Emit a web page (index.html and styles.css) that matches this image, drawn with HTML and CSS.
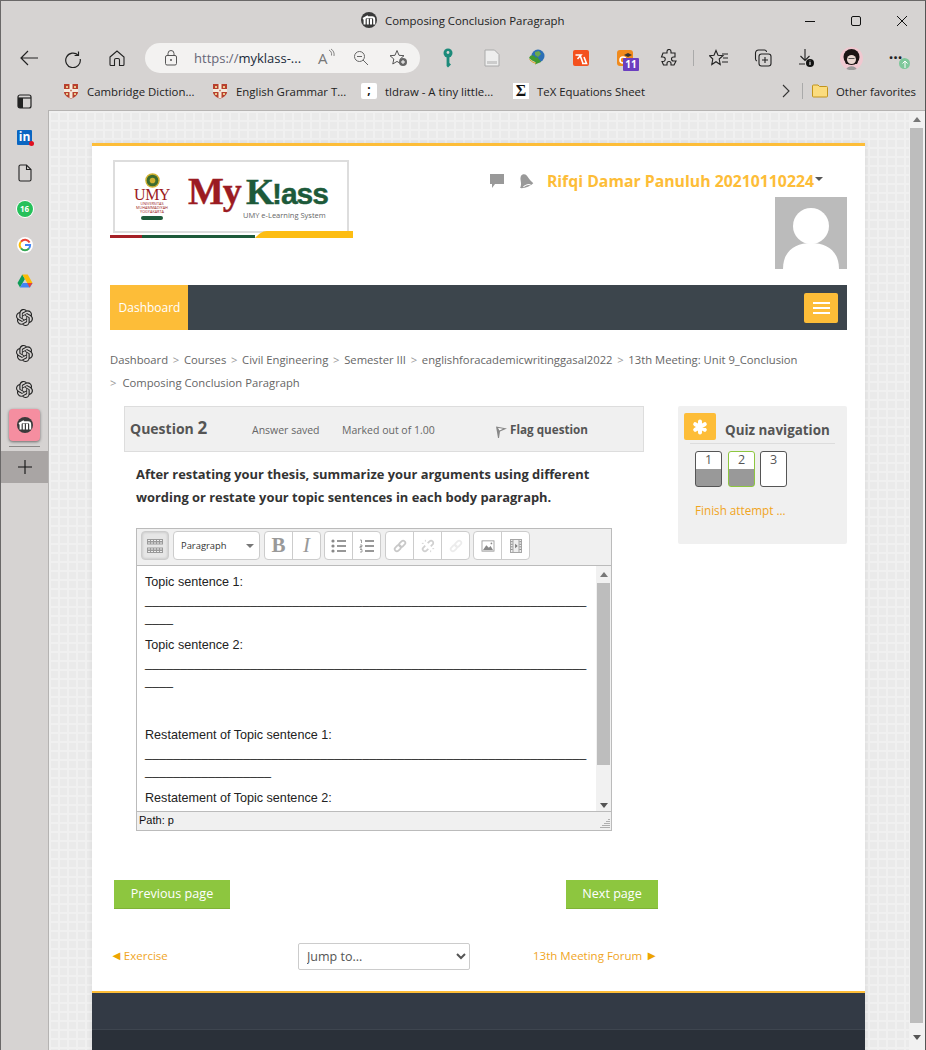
FILE: index.html
```html
<!DOCTYPE html>
<html>
<head>
    <title>Composing Conclusion Paragraph</title>
    <link rel="stylesheet" href="styles.css">
</head>
<body>
    <svg class="defs" width="0" height="0">
        <symbol id="moodle" viewBox="0 0 16 16">
            <circle cx="8" cy="8" r="8" fill="#3a3a3a"/>
            <path d="M3.600 12.500V7.600C3.600 6 4.600 5.200 5.800 5.200H11C12.400 5.200 13.200 6.200 13.200 7.400V12.500M6.800 12.500V6.800M10 12.500V6.800M2 6.800L7 4" fill="none" stroke="#fff" stroke-width="2"/>
        </symbol>
        <symbol id="shield" viewBox="0 0 16 16">
            <path d="M1 1H15V9C15 12.500 11 14.600 8 15.600C5 14.600 1 12.500 1 9Z" fill="#b8402e"/>
            <path d="M1 6H15V9H1ZM6.500 1H9.500V15H6.500Z" fill="#f3e9dc"/>
            <path d="M3 3H5V5H3ZM11 3H13V5H11ZM3 10H5V12H3ZM11 10H13V12H11Z" fill="#e8c98c"/>
            <path d="M7.400 6.800H8.600V8.200H7.400Z" fill="#b8402e"/>
        </symbol>
        <symbol id="knot" viewBox="0 0 24 24">
            <path fill="#222" d="M22.2819 9.8211a5.9847 5.9847 0 0 0-.5157-4.9108 6.0462 6.0462 0 0 0-6.5098-2.9A6.0651 6.0651 0 0 0 4.9807 4.1818a5.9847 5.9847 0 0 0-3.9977 2.9 6.0462 6.0462 0 0 0 .7427 7.0966 5.98 5.98 0 0 0 .511 4.9107 6.051 6.051 0 0 0 6.5146 2.9001A5.9847 5.9847 0 0 0 13.2599 24a6.0557 6.0557 0 0 0 5.7718-4.2058 5.9894 5.9894 0 0 0 3.9977-2.9001 6.0557 6.0557 0 0 0-.7475-7.0729zm-9.022 12.6081a4.4755 4.4755 0 0 1-2.8764-1.0408l.1419-.0804 4.7783-2.7582a.7948.7948 0 0 0 .3927-.6813v-6.7369l2.02 1.1686a.071.071 0 0 1 .038.052v5.5826a4.504 4.504 0 0 1-4.4945 4.4944zm-9.6607-4.1254a4.4708 4.4708 0 0 1-.5346-3.0137l.142.0852 4.783 2.7582a.7712.7712 0 0 0 .7806 0l5.8428-3.3685v2.3324a.0804.0804 0 0 1-.0332.0615L9.74 19.9502a4.4992 4.4992 0 0 1-6.1408-1.6464zM2.3408 7.8956a4.485 4.485 0 0 1 2.3655-1.9728V11.6a.7664.7664 0 0 0 .3879.6765l5.8144 3.3543-2.0201 1.1685a.0757.0757 0 0 1-.071 0l-4.8303-2.7865A4.504 4.504 0 0 1 2.3408 7.872zm16.5963 3.8558L13.1038 8.364 15.1192 7.2a.0757.0757 0 0 1 .071 0l4.8303 2.7913a4.4944 4.4944 0 0 1-.6765 8.1042v-5.6772a.79.79 0 0 0-.407-.667zm2.0107-3.0231l-.142-.0852-4.7735-2.7818a.7759.7759 0 0 0-.7854 0L9.409 9.2297V6.8974a.0662.0662 0 0 1 .0284-.0615l4.8303-2.7866a4.4992 4.4992 0 0 1 6.6802 4.66zM8.3065 12.863l-2.02-1.1638a.0804.0804 0 0 1-.038-.0567V6.0742a4.4992 4.4992 0 0 1 7.3757-3.4537l-.142.0805L8.704 5.459a.7948.7948 0 0 0-.3927.6813zm1.0976-2.3654l2.602-1.4998 2.6069 1.4998v2.9994l-2.5974 1.4997-2.6067-1.4997Z"/>
        </symbol>
    </svg>

    <div class="titlebar">
        <div class="title">
            <svg class="icon16" width="16" height="16"><use href="#moodle"/></svg>
            <span>Composing Conclusion Paragraph</span>
        </div>
        <div class="window-controls">
            <svg width="46" height="40" viewBox="0 0 46 40"><path d="M18 20.500H28" stroke="#111"/></svg>
            <svg width="46" height="40" viewBox="0 0 46 40"><rect x="18.500" y="15.500" width="9" height="9" rx="1.500" fill="none" stroke="#111"/></svg>
            <svg width="46" height="40" viewBox="0 0 46 40"><path d="M18 15L28 25M28 15L18 25" stroke="#111"/></svg>
        </div>
    </div>

    <div class="toolbar">
        <div class="tool nav-tool">
            <svg width="22" height="22" viewBox="0 0 22 22"><path d="M20 11H3M10 4L3 11L10 18" fill="none" stroke="#222" stroke-width="1.200"/></svg>
        </div>
        <div class="tool nav-tool">
            <svg width="20" height="20" viewBox="0 0 20 20"><path d="M15.500 3.600V7.500H11.600M15.300 7.300A7.300 7.300 0 1 0 17.200 11" fill="none" stroke="#222" stroke-width="1.200"/></svg>
        </div>
        <div class="tool nav-tool">
            <svg width="18" height="18" viewBox="0 0 18 18"><path d="M2 8L9 2L16 8V15.500A1 1 0 0 1 15 16.500H11.500V11A1.500 1.500 0 0 0 10 9.500H8A1.500 1.500 0 0 0 6.500 11V16.500H3A1 1 0 0 1 2 15.500Z" fill="none" stroke="#222" stroke-width="1.100"/></svg>
        </div>
        <div class="address">
            <svg width="14" height="16" viewBox="0 0 14 16"><rect x="1.500" y="5.500" width="11" height="9.500" rx="1.500" fill="none" stroke="#555"/><path d="M4 5.500V3.500A3 3 0 0 1 10 3.500V5.500" fill="none" stroke="#555"/><circle cx="7" cy="10" r="1" fill="#555"/></svg>
            <span class="url"><span class="url-dim">https://</span>myklass-...</span>
            <span class="read-aloud">A<svg width="7" height="12" viewBox="0 0 7 12"><path d="M1 2C3 3 4 5 3.500 7.500M3 1C5.500 2.500 6.500 5 6 8" fill="none" stroke="#777" stroke-width="0.900"/></svg></span>
            <svg width="16" height="16" viewBox="0 0 16 16"><circle cx="6.500" cy="6.500" r="5" fill="none" stroke="#666"/><path d="M10 10L15 15M4 6.500H9" stroke="#666"/></svg>
            <svg class="fav-add" width="20" height="18" viewBox="0 0 20 18"><path d="M8 1.500L10 6.300L15 6.700L11.200 10L12.200 15L8 12.400L3.800 15L4.800 10L1 6.700L6 6.300Z" fill="none" stroke="#555"/><circle cx="14" cy="13" r="4" fill="#666"/><path d="M12 13H16M14 11V15" stroke="#fff"/></svg>
        </div>
        <div class="tool first-ext">
            <svg width="12" height="20" viewBox="0 0 12 20"><circle cx="6" cy="5" r="4.500" fill="#1c8a7a"/><circle cx="6" cy="4.500" r="1.400" fill="#d6d3d2"/><path d="M4.600 9H7.400V15L9 16.500L6 19.500L4.600 18Z" fill="#1c8a7a"/></svg>
        </div>
        <div class="tool">
            <svg width="16" height="18" viewBox="0 0 16 18"><path d="M1 1H10.500L15 5.500V17H1Z" fill="#eee" stroke="#aaa"/><path d="M3 12H13V15H3Z" fill="#ccc"/></svg>
        </div>
        <div class="tool">
            <svg width="18" height="18" viewBox="0 0 18 18"><circle cx="10" cy="7" r="6.500" fill="#2c6fb5"/><path d="M7 3L11 2L13 5L10 8L7 6Z" fill="#6aa84f"/><path d="M1 9C3 5 6 6 8 9L9 7.500L13 13L7 15.500L7.500 13C5 12 3 11 1 9Z" fill="#3f9a2f"/><path d="M1.500 10.500C4 13 6 14 8 14" fill="none" stroke="#e0a020"/></svg>
        </div>
        <div class="tool">
            <div class="ext-red">
                <svg width="16" height="16" viewBox="0 0 16 16"><path d="M2.500 4H8L4.500 8M7 4L10 12.500M9 12.500L13.500 12.500L11 6" fill="none" stroke="#fff" stroke-width="1.600"/></svg>
            </div>
        </div>
        <div class="tool">
            <div class="ext-orange">
                <svg width="16" height="16" viewBox="0 0 16 16"><circle cx="6" cy="9" r="3" fill="none" stroke="#fff" stroke-width="1.600"/><path d="M7 4L11 2L15 4L11 6Z" fill="#333"/></svg>
                <span class="ext-badge">11</span>
            </div>
        </div>
        <div class="tool">
            <svg width="18" height="18" viewBox="0 0 18 18"><path d="M7 2.500A2 2 0 0 1 11 2.500V4H15V8H13.500A2 2 0 0 0 13.500 12H16L14 16H11V14.500A2 2 0 0 0 7 14.500V16H3.500L2 12.500H3A2.200 2.200 0 0 0 3 8H1.500L3 4H7Z" fill="none" stroke="#222" stroke-width="1.100"/></svg>
        </div>
        <div class="tool-sep"></div>
        <div class="tool right-tool">
            <svg width="20" height="18" viewBox="0 0 20 18"><path d="M7 1.500L9 6.300L14 6.700L10.200 10L11.200 15.500L7 12.700L2.800 15.500L3.800 10L0.500 6.700L5 6.300Z" fill="none" stroke="#222" stroke-width="1.100"/><path d="M13 5H19M14 9H19M13 13H19" stroke="#222"/></svg>
        </div>
        <div class="tool">
            <svg width="18" height="18" viewBox="0 0 18 18"><rect x="5" y="5" width="12" height="12" rx="2.500" fill="none" stroke="#222" stroke-width="1.100"/><path d="M3 12A2 2 0 0 1 1.500 10V4A3 3 0 0 1 4.500 1H10A2 2 0 0 1 12.500 3M8 11H14M11 8V14" fill="none" stroke="#222" stroke-width="1.100"/></svg>
        </div>
        <div class="tool">
            <svg width="20" height="20" viewBox="0 0 20 20"><path d="M8 1V12M3.500 8L8 12.500L12.500 8M2 16H8" fill="none" stroke="#222" stroke-width="1.100"/><circle cx="13" cy="15" r="4" fill="#111"/><path d="M13 14V17M13 12.700V13.300" stroke="#fff"/></svg>
        </div>
        <div class="tool">
            <div class="avatar">
                <svg width="23" height="23" viewBox="0 0 23 23"><circle cx="11.500" cy="10" r="8" fill="#1c1414"/><path d="M6 17C5 15 5 14 6 13L17 13C18 14 18 15 17 17Z" fill="#1c1414"/><circle cx="11.500" cy="12.500" r="4.500" fill="#e9d6d0"/><path d="M8.500 11.500H14.500" stroke="#555"/><path d="M6 23C7 18 16 18 17 23Z" fill="#999"/></svg>
            </div>
        </div>
        <div class="tool">
            <span class="dots">...</span>
            <span class="update-dot">
                <svg width="10" height="10" viewBox="0 0 10 10"><path d="M5 9V2M2.500 4.500L5 2L7.500 4.500" fill="none" stroke="#fff"/></svg>
            </span>
        </div>
    </div>

    <div class="bookmarks">
        <div class="bookmark bm-1"><svg width="16" height="16"><use href="#shield"/></svg><span>Cambridge Diction...</span></div>
        <div class="bookmark bm-2"><svg width="16" height="16"><use href="#shield"/></svg><span>English Grammar T...</span></div>
        <div class="bookmark bm-3"><span class="tldraw">;</span><span>tldraw - A tiny little...</span></div>
        <div class="bookmark bm-4"><span class="sigma">Σ</span><span>TeX Equations Sheet</span></div>
        <svg class="bm-more" width="10" height="14" viewBox="0 0 10 14"><path d="M2 1L8 7L2 13" fill="none" stroke="#333" stroke-width="1.100"/></svg>
        <div class="bm-sep"></div>
        <div class="bookmark">
            <svg width="16" height="14" viewBox="0 0 16 14"><path d="M0.500 2A1 1 0 0 1 1.500 1H6L7.500 2.500H14.500A1 1 0 0 1 15.500 3.500V12A1 1 0 0 1 14.500 13H1.500A1 1 0 0 1 0.500 12Z" fill="#fbdc7e" stroke="#c2941c"/></svg>
            <span>Other favorites</span>
        </div>
    </div>

    <div class="window">
        <div class="sidebar">
            <div class="side-item">
                <svg width="15" height="15" viewBox="0 0 15 15"><rect x="1" y="1" width="13" height="13" rx="2" fill="none" stroke="#222" stroke-width="1.200"/><path d="M1 4H14" stroke="#222" stroke-width="1.200"/><path d="M1 4H6V14H3A2 2 0 0 1 1 12Z" fill="#222"/></svg>
            </div>
            <div class="side-item">
                <span class="linkedin">in<i></i></span>
            </div>
            <div class="side-item">
                <svg width="14" height="18" viewBox="0 0 14 18"><path d="M1 2.500A1.500 1.500 0 0 1 2.500 1H8.500L13 5.500V15.500A1.500 1.500 0 0 1 11.500 17H2.500A1.500 1.500 0 0 1 1 15.500ZM8.500 1V5.500H13" fill="none" stroke="#222" stroke-width="1.100"/></svg>
            </div>
            <div class="side-item">
                <span class="whatsapp">16</span>
            </div>
            <div class="side-item">
                <svg width="16" height="16" viewBox="0 0 16 16"><circle cx="8" cy="8" r="8" fill="#fff"/><path d="M12.600 5.500A5.200 5.200 0 0 0 4 4.700" fill="none" stroke="#ea4335" stroke-width="2"/><path d="M4 4.700A5.200 5.200 0 0 0 4 11.300" fill="none" stroke="#fbbc05" stroke-width="2"/><path d="M4 11.300A5.200 5.200 0 0 0 12 11.300" fill="none" stroke="#34a853" stroke-width="2"/><path d="M12 11.300A5.200 5.200 0 0 0 13.100 8H8" fill="none" stroke="#4285f4" stroke-width="2"/></svg>
            </div>
            <div class="side-item">
                <svg width="16" height="14" viewBox="0 0 16 14"><path d="M5.300 0.500L0.500 9L3 13.500L7.900 5Z" fill="#0f9d58"/><path d="M10.700 0.500L15.500 9H10.200L5.300 0.500Z" fill="#fbbc05"/><path d="M3 13.500H13L15.500 9H5.500Z" fill="#4285f4"/><path d="M12.500 13.500L15.500 9H10.200Z" fill="#ea4335"/></svg>
            </div>
            <div class="side-item"><svg width="17" height="17"><use href="#knot"/></svg></div>
            <div class="side-item"><svg width="17" height="17"><use href="#knot"/></svg></div>
            <div class="side-item"><svg width="17" height="17"><use href="#knot"/></svg></div>
            <div class="side-active"><svg width="16" height="16"><use href="#moodle"/></svg></div>
            <div class="side-rule"></div>
            <div class="side-add">
                <svg width="16" height="16" viewBox="0 0 16 16"><path d="M8 1V15M1 8H15" stroke="#111" stroke-width="1.100"/></svg>
            </div>
        </div>

        <div class="viewport">
            <div class="page">
                <header class="site-header">
                    <div class="logo">
                        <div class="logo-frame">
                            <div class="logo-umy">
                                <svg width="15" height="15" viewBox="0 0 16 16"><circle cx="8" cy="8" r="7" fill="#3c6b2e" stroke="#d0b030" stroke-width="1.500"/><circle cx="8" cy="8" r="3" fill="#d0b030"/></svg>
                                <span class="umy-name">UMY</span>
                                <span class="umy-sub">UNIVERSITAS MUHAMMADIYAH YOGYAKARTA</span>
                                <span class="umy-tag"></span>
                            </div>
                            <div class="logo-word">
                                <div class="logo-name"><span class="logo-my">My</span><span class="logo-k">K</span><span class="logo-klass">!ass</span></div>
                                <div class="logo-tag">UMY e-Learning System</div>
                            </div>
                        </div>
                        <div class="logo-strip">
                            <span class="strip-red"></span>
                            <span class="strip-green"></span>
                            <svg width="98" height="7" viewBox="0 0 98 7"><path d="M0 7C4 3 7 0 12 0H98V7Z" fill="#fdbd12"/></svg>
                        </div>
                    </div>
                    <div class="user-area">
                        <div class="user-line">
                            <svg width="16" height="16" viewBox="0 0 16 16"><path d="M1 1H15V11H6L3 15V11H1Z" fill="#999"/></svg>
                            <svg class="bell" width="16" height="16" viewBox="0 0 16 16"><path d="M8 1C11 1 12 4 12.500 7C13 10 14.500 11 15 13C11 15 5 15 1 13C3 11 3.500 9 4 6.500C4.500 3 6 1 8 1Z" fill="#999"/><path d="M4.500 13C7 11.500 11 12 12 14" fill="none" stroke="#fff"/></svg>
                            <a class="user-name">Rifqi Damar Panuluh 20210110224</a>
                            <span class="caret"></span>
                        </div>
                        <svg class="user-pic" width="72" height="72" viewBox="0 0 72 72"><rect width="72" height="72" fill="#bbb"/><circle cx="36" cy="29" r="18" fill="#fff"/><path d="M8 72C8 54 20 46 36 46C52 46 64 54 64 72Z" fill="#fff"/></svg>
                    </div>
                </header>

                <nav class="navbar">
                    <a class="nav-tab">Dashboard</a>
                    <button class="burger"><span></span><span></span><span></span></button>
                </nav>

                <div class="breadcrumb">
                    <span>Dashboard</span><b>&gt;</b><span>Courses</span><b>&gt;</b><span>Civil Engineering</span><b>&gt;</b><span>Semester III</span><b>&gt;</b><span>englishforacademicwritinggasal2022</span><b>&gt;</b><span>13th Meeting: Unit 9_Conclusion</span><br>
                    <b class="crumb-first">&gt;</b><span>Composing Conclusion Paragraph</span>
                </div>

                <div class="columns">
                    <main class="quiz">
                        <div class="question-head">
                            <h3 class="question-no">Question <span>2</span></h3>
                            <span class="state">Answer saved</span>
                            <span class="grade">Marked out of 1.00</span>
                            <svg class="flag" width="12" height="14" viewBox="0 0 12 14"><path d="M1 1.500L12 3.500L5 6.500L4 13L3 13Z" fill="#888"/><path d="M3 3L8 3.800L4.500 5.500Z" fill="#fff"/></svg>
                            <a class="flag-text">Flag question</a>
                        </div>
                        <div class="question-text">After restating your thesis, summarize your arguments using different<br>wording or restate your topic sentences in each body paragraph.</div>

                        <div class="editor">
                            <div class="editor-bar">
                                <div class="btn-group g1 toggled">
                                    <span class="ed-btn">
                                        <svg width="16" height="16" viewBox="0 0 16 16"><path d="M0 1H16V6.500H0ZM0 9.500H16V15H0Z" fill="#999"/><path d="M1 2.500H15M1 5H15M1 11H15M1 13.500H15" stroke="#eee" stroke-dasharray="2 1"/></svg>
                                    </span>
                                </div>
                                <div class="format-box"><span>Paragraph</span><i></i></div>
                                <div class="btn-group g2">
                                    <span class="ed-btn letter">B</span>
                                    <span class="ed-btn letter ital">I</span>
                                </div>
                                <div class="btn-group g2 tight">
                                    <span class="ed-btn">
                                        <svg width="16" height="14" viewBox="0 0 16 14"><circle cx="2" cy="2" r="1.600" fill="#888"/><circle cx="2" cy="7" r="1.600" fill="#888"/><circle cx="2" cy="12" r="1.600" fill="#888"/><path d="M6 2H15M6 7H15M6 12H15" stroke="#777" stroke-width="1.500"/></svg>
                                    </span>
                                    <span class="ed-btn">
                                        <svg width="16" height="14" viewBox="0 0 16 14"><path d="M1 1H2.500V4M1 6H3V7.500H1V9H3M1 10.500H3V13H1" fill="none" stroke="#888" stroke-width="0.800"/><path d="M6 2H15M6 7H15M6 12H15" stroke="#777" stroke-width="1.500"/></svg>
                                    </span>
                                </div>
                                <div class="btn-group g3">
                                    <span class="ed-btn">
                                        <svg width="14" height="14" viewBox="0 0 16 16"><g transform="rotate(-45 8 8)" fill="none" stroke="#c8c8c8" stroke-width="2"><rect x="0.500" y="5.500" width="8" height="5" rx="2.500"/><rect x="7.500" y="5.500" width="8" height="5" rx="2.500"/></g></svg>
                                    </span>
                                    <span class="ed-btn">
                                        <svg width="14" height="14" viewBox="0 0 16 16"><g transform="rotate(-45 8 8)" fill="none" stroke="#d0d0d0" stroke-width="2"><path d="M6 5.500H3A2.500 2.500 0 0 0 3 10.500H6M10 5.500H13A2.500 2.500 0 0 1 13 10.500H10"/></g><path d="M5 1V3M1 5H3M11 15V13M15 11H13" stroke="#d0d0d0"/></svg>
                                    </span>
                                    <span class="ed-btn">
                                        <svg width="14" height="14" viewBox="0 0 16 16"><g transform="rotate(-45 8 8)" fill="none" stroke="#ececec" stroke-width="2"><rect x="0.500" y="5.500" width="8" height="5" rx="2.500"/><rect x="7.500" y="5.500" width="8" height="5" rx="2.500"/></g></svg>
                                    </span>
                                </div>
                                <div class="btn-group g2 tight">
                                    <span class="ed-btn">
                                        <svg width="14" height="12" viewBox="0 0 16 14"><rect x="1" y="1" width="14" height="12" fill="#fff" stroke="#999"/><path d="M2 12L6 6L9 9L11 7L14 12Z" fill="#888"/><circle cx="12" cy="4" r="1" fill="#888"/></svg>
                                    </span>
                                    <span class="ed-btn">
                                        <svg width="12" height="14" viewBox="0 0 14 16"><rect x="0.500" y="0.500" width="13" height="15" fill="#eee" stroke="#999"/><path d="M3.500 1V15M10.500 1V15" stroke="#999"/><path d="M6 5.500L9 8L6 10.500Z" fill="#777"/><path d="M1 3H3M1 6H3M1 9H3M1 12H3M11 3H13M11 6H13M11 9H13M11 12H13" stroke="#777"/></svg>
                                    </span>
                                </div>
                            </div>
                            <div class="editor-body">
                                <div class="editor-text">
                                    <p>Topic sentence 1:<br>_______________________________________________________________<br>____</p>
                                    <p>Topic sentence 2:<br>_______________________________________________________________<br>____</p>
                                    <p>&nbsp;</p>
                                    <p>Restatement of Topic sentence 1:<br>_______________________________________________________________<br>__________________</p>
                                    <p>Restatement of Topic sentence 2:</p>
                                </div>
                                <div class="editor-scroll">
                                    <i class="arrow-up"></i>
                                    <div class="editor-thumb"></div>
                                    <i class="arrow-down"></i>
                                </div>
                            </div>
                            <div class="editor-path">
                                <span>Path: p</span>
                                <svg width="12" height="12" viewBox="0 0 12 12"><path d="M10 1V2M8 3V4M10 3V4M6 5V6M8 5V6M10 5V6M4 7V8M6 7V8M8 7V8M10 7V8M2 9V10M4 9V10M6 9V10M8 9V10M10 9V10" stroke="#999" stroke-width="1.500"/></svg>
                            </div>
                        </div>

                        <div class="page-buttons">
                            <a class="green-btn prev">Previous page</a>
                            <a class="green-btn next">Next page</a>
                        </div>

                        <div class="jump-row">
                            <a class="jump-link"><span class="tri tri-prev">◄</span> Exercise</a>
                            <select class="jump-select"><option>Jump to...</option></select>
                            <a class="jump-link jump-next">13th Meeting Forum <span class="tri">►</span></a>
                        </div>
                    </main>

                    <aside class="quiz-nav">
                        <div class="quiz-nav-head">
                            <span class="quiz-nav-icon">
                                <svg width="16" height="16" viewBox="0 0 16 16"><path d="M8 2.500V13.500M3.200 5.200L12.800 10.800M12.800 5.200L3.200 10.800" stroke="#fff" stroke-width="4" stroke-linecap="round"/></svg>
                            </span>
                            <h3>Quiz navigation</h3>
                        </div>
                        <div class="quiz-cells">
                            <span class="cell answered">1</span>
                            <span class="cell answered current">2</span>
                            <span class="cell last">3</span>
                        </div>
                        <a class="finish">Finish attempt ...</a>
                    </aside>
                </div>

                <footer class="site-footer">
                    <div class="footer-top"></div>
                    <div class="footer-bottom"></div>
                </footer>
            </div>
        </div>

        <div class="scrollbar">
            <i class="arrow-up"></i>
            <div class="scroll-thumb"></div>
            <i class="arrow-down"></i>
        </div>
    </div>
</body>
</html>
```

FILE: styles.css
```css
* {
    box-sizing: border-box;
}
html, body {
    margin: 0;
    height: 100%;
}
body {
    width: 926px;
    height: 1050px;
    overflow: hidden;
    display: flex;
    flex-direction: column;
    background-color: #d6d3d2;
    border-top: 1px solid #6a6868;
    border-left: 1px solid #6a6868;
    border-right: 1px solid #555;
    font-family: "Open Sans", sans-serif;
    color: #333;
}
.defs {
    position: absolute;
}

/* browser chrome */
.titlebar {
    height: 39px;
    display: flex;
    flex-shrink: 0;
    justify-content: flex-end;
    position: relative;
}
.title {
    position: absolute;
    left: 360px;
    top: 11px;
    display: flex;
    align-items: center;
    gap: 8px;
    font-size: 11.400px;
    color: #222;
}
.window-controls {
    display: flex;
}
.toolbar {
    height: 36px;
    flex-shrink: 0;
    display: flex;
    align-items: center;
    padding-left: 5.500px;
}
.tool {
    width: 44.200px;
    height: 30px;
    flex-shrink: 0;
    display: flex;
    align-items: center;
    justify-content: center;
    position: relative;
}
.address {
    width: 275px;
    height: 30px;
    margin-left: 6px;
    flex-shrink: 0;
    background-color: #f3f2f1;
    border-radius: 15px;
    display: flex;
    align-items: center;
    padding-left: 19px;
    position: relative;
    font-size: 13px;
}
.url {
    margin-left: 16px;
    width: 124px;
    color: #1a2a3a;
}
.url-dim {
    color: #667;
}
.read-aloud {
    width: 35px;
    color: #777;
    font-size: 15px;
    display: flex;
    align-items: flex-start;
}
.fav-add {
    margin-left: 20px;
}
.first-ext {
    margin-left: 6px;
}
.ext-red {
    width: 16px;
    height: 16px;
    background-color: #f4511e;
    border-radius: 2px;
}
.ext-orange {
    width: 16px;
    height: 16px;
    background-color: #f08a1d;
    border-radius: 3px;
    position: relative;
}
.ext-badge {
    position: absolute;
    left: 6px;
    top: 8px;
    width: 16px;
    height: 13px;
    background-color: #6b3fc0;
    color: #fff;
    font-size: 10px;
    font-weight: 700;
    line-height: 13px;
    text-align: center;
    border-radius: 1px;
}
.tool-sep {
    width: 1px;
    height: 16px;
    background-color: #aaa;
    margin-left: 2px;
    flex-shrink: 0;
}
.right-tool {
    margin-left: 2.500px;
}
.avatar {
    width: 23px;
    height: 23px;
    border-radius: 50%;
    background-color: #f0c8d0;
    display: flex;
    align-items: center;
    justify-content: center;
    overflow: hidden;
}
.dots {
    font-size: 16px;
    font-weight: 700;
    line-height: 16px;
    margin-top: -10px;
    color: #222;
}
.update-dot {
    position: absolute;
    left: 26px;
    top: 15px;
    width: 11px;
    height: 11px;
    border-radius: 50%;
    background-color: #7ec79a;
    display: flex;
    align-items: center;
    justify-content: center;
}
.bookmarks {
    height: 34px;
    flex-shrink: 0;
    display: flex;
    align-items: center;
    font-size: 11.400px;
    color: #222;
    padding: 0 0 4px 62px;
}
.bookmark {
    display: flex;
    align-items: center;
    gap: 8px;
    flex-shrink: 0;
    white-space: nowrap;
}
.bm-1 {
    width: 149px;
}
.bm-2 {
    width: 149px;
}
.bm-3 {
    width: 152px;
}
.bm-4 {
    width: 268px;
}
.tldraw {
    width: 16px;
    height: 16px;
    background-color: #fff;
    color: #111;
    font-size: 12px;
    font-weight: 700;
    line-height: 14px;
    text-align: center;
    border-radius: 2px;
}
.sigma {
    width: 16px;
    height: 16px;
    background-color: #fff;
    color: #111;
    font: 700 16px/16px "Liberation Serif", serif;
    text-align: center;
}
.bm-sep {
    width: 1px;
    height: 16px;
    background-color: #aaa;
    margin: 0 9px 0 11px;
    flex-shrink: 0;
}
.bm-more {
    flex-shrink: 0;
}

/* sidebar + viewport */
.window {
    flex: 1;
    min-height: 0;
    display: flex;
}
.sidebar {
    width: 48px;
    flex-shrink: 0;
    border-right: 1px solid #b5b3b2;
    display: flex;
    flex-direction: column;
    align-items: center;
    position: relative;
    z-index: 1;
}
.side-item {
    height: 36px;
    width: 100%;
    flex-shrink: 0;
    display: flex;
    align-items: center;
    justify-content: center;
}
.side-item:first-child {
    margin-top: -27px;
}
.linkedin {
    width: 15px;
    height: 15px;
    background-color: #0a66c2;
    color: #fff;
    font-size: 12px;
    font-weight: 700;
    line-height: 14px;
    text-align: center;
    position: relative;
    border-radius: 1px;
}
.linkedin i {
    position: absolute;
    right: -2px;
    bottom: -1px;
    width: 5px;
    height: 5px;
    background-color: #e01020;
    border-radius: 50%;
}
.whatsapp {
    width: 16px;
    height: 16px;
    background-color: #25c05a;
    border-radius: 50%;
    box-shadow: 0 0 0 1px #fff;
    color: #fff;
    font-size: 8px;
    font-weight: 700;
    line-height: 16px;
    text-align: center;
}
.side-active {
    width: 31px;
    height: 32px;
    margin-top: 2px;
    flex-shrink: 0;
    background-color: #f58ea0;
    border-radius: 4px;
    box-shadow: 0 1px 3px rgba(0, 0, 0, 0.5);
    display: flex;
    align-items: center;
    justify-content: center;
}
.side-rule {
    width: 31px;
    height: 1px;
    margin-top: 5px;
    background-color: #8a8887;
    flex-shrink: 0;
}
.side-add {
    width: 100%;
    height: 32px;
    margin-top: 4px;
    background-color: #a9a5a4;
    display: flex;
    align-items: center;
    justify-content: center;
    flex-shrink: 0;
}
.viewport {
    flex: 1;
    min-width: 0;
    overflow: hidden;
    border-top: 1px solid #b5b3b2;
    padding: 32px 0 0 43px;
    background-color: #eaeaea;
    background-image:
        linear-gradient(#f0f0f0 2px, transparent 2px),
        linear-gradient(90deg, #f0f0f0 2px, transparent 2px);
    background-size: 9px 9px;
}
.scrollbar {
    width: 16px;
    flex-shrink: 0;
    background-color: #f1f1f1;
    border-top: 1px solid #b5b3b2;
    display: flex;
    flex-direction: column;
    align-items: center;
    padding: 6px 1px 4px 0;
}
.scroll-thumb {
    width: 13px;
    height: 895px;
    margin: 6px 0 12px;
    background-color: #bdbdbd;
}
.arrow-up, .arrow-down {
    width: 0;
    height: 0;
    border-left: 4px solid transparent;
    border-right: 4px solid transparent;
    flex-shrink: 0;
}
.arrow-up {
    border-bottom: 5px solid #777;
}
.arrow-down {
    border-top: 5px solid #555;
}

/* moodle page */
.page {
    width: 773px;
    background-color: #fff;
    border-top: 3px solid #fdbd38;
    box-shadow: 0 0 6px rgba(0, 0, 0, 0.08);
}
.site-header {
    height: 139px;
    padding: 0 18px;
    display: flex;
    justify-content: space-between;
}
.logo {
    width: 243px;
    padding-top: 14px;
}
.logo-frame {
    width: 236px;
    height: 73px;
    margin-left: 3px;
    border: 2px solid #ddd;
    display: flex;
    align-items: center;
    padding: 0 0 0 19px;
}
.logo-umy {
    width: 36px;
    display: flex;
    flex-direction: column;
    align-items: center;
    flex-shrink: 0;
}
.umy-name {
    font: 400 16px/14px "Liberation Serif", serif;
    color: #9b1b22;
    letter-spacing: -0.500px;
}
.umy-sub {
    font-size: 3.800px;
    line-height: 4px;
    color: #9b1b22;
    text-align: center;
}
.umy-tag {
    width: 22px;
    height: 4px;
    margin-top: 2px;
    background-color: #1d5a3a;
    border-radius: 2px;
}
.logo-word {
    margin-left: 18px;
}
.logo-name {
    font: 700 38px/33px "Liberation Serif", serif;
    letter-spacing: -1px;
    white-space: nowrap;
    -webkit-text-stroke: 0.4px currentColor;
}
.logo-my {
    color: #9b1b22;
}
.logo-k {
    margin-left: 5px;
    color: #1d5a3a;
    font-size: 36px;
    letter-spacing: -2px;
}
.logo-klass {
    color: #1d5a3a;
    font-family: "Liberation Sans", sans-serif;
    font-size: 30px;
}
.logo-tag {
    font-size: 7.500px;
    line-height: 8px;
    color: #666;
    margin: 1px 0 0 55px;
    white-space: nowrap;
}
.logo-strip {
    display: flex;
    align-items: flex-end;
    margin-top: -2px;
    position: relative;
    height: 7px;
}
.logo-strip span {
    height: 3px;
}
.strip-red {
    width: 32px;
    background-color: #a52026;
}
.strip-green {
    width: 113px;
    background-color: #1d5a3a;
}
.user-area {
    display: flex;
    flex-direction: column;
    align-items: flex-end;
    padding-top: 22px;
}
.user-line {
    display: flex;
    align-items: center;
    height: 26px;
    margin-bottom: 3px;
}
.bell {
    margin-left: 12px;
    transform: rotate(-20deg);
}
.user-name {
    margin-left: 14px;
    font-size: 15.800px;
    font-weight: 700;
    color: #fdbd38;
    white-space: nowrap;
}
.caret {
    width: 0;
    height: 0;
    margin: 0 24px 4px 1px;
    border-left: 4px solid transparent;
    border-right: 4px solid transparent;
    border-top: 4px solid #555;
}
.user-pic {
    display: block;
    flex-shrink: 0;
}
.navbar {
    height: 45px;
    margin: 0 18px;
    background-color: #3c454c;
    display: flex;
    justify-content: space-between;
    align-items: center;
    padding-right: 9px;
}
.nav-tab {
    width: 78px;
    height: 45px;
    padding-left: 1px;
    background-color: #fdbd38;
    color: #fff;
    font-size: 12px;
    line-height: 45px;
    text-align: center;
}
.burger {
    width: 34px;
    height: 30px;
    padding: 0;
    background-color: #fdbd38;
    border: none;
    border-radius: 2px;
    display: flex;
    flex-direction: column;
    align-items: center;
    justify-content: center;
    gap: 3px;
}
.burger span {
    width: 17px;
    height: 2px;
    background-color: #fff;
}
.breadcrumb {
    margin: 18px 18px 0;
    font-size: 11.250px;
    line-height: 23px;
    color: #666;
    white-space: nowrap;
}
.breadcrumb b {
    font-weight: 400;
    color: #999;
    margin: 0 4.700px;
}
.breadcrumb b.crumb-first {
    margin-left: 0;
    margin-right: 6px;
}
.columns {
    display: flex;
    margin-top: 12px;
    padding-left: 18px;
}
.quiz {
    width: 550px;
    flex-shrink: 0;
}
.question-head {
    height: 46px;
    width: 520px;
    margin-left: 14px;
    background-color: #f0f0f0;
    border: 1px solid #ddd;
    display: flex;
    align-items: center;
    padding-left: 5px;
    color: #666;
    font-size: 10.500px;
}
.question-no {
    width: 122px;
    margin: 0 0 3px;
    font-size: 14px;
    font-weight: 700;
    color: #555;
}
.question-no span {
    font-size: 17px;
}
.state {
    width: 90px;
    margin-top: 1px;
}
.grade {
    width: 153px;
    margin-top: 1px;
}
.flag {
    margin-top: 5px;
}
.flag-text {
    margin-left: 3px;
    font-size: 11.700px;
    font-weight: 700;
    color: #555;
}
.question-text {
    margin: 11px 0 0 26px;
    font-size: 12.900px;
    font-weight: 700;
    line-height: 23px;
    color: #333;
    white-space: nowrap;
}
.editor {
    width: 476px;
    height: 303px;
    margin: 19px 0 0 26px;
    border: 1px solid #bbb;
    display: flex;
    flex-direction: column;
    font-family: "Liberation Sans", sans-serif;
}
.editor-bar {
    height: 37px;
    flex-shrink: 0;
    background-color: #f0f0f0;
    border-bottom: 1px solid #bbb;
    display: flex;
    align-items: center;
    gap: 4px;
    padding: 0 0 3px 4px;
}
.btn-group {
    height: 29px;
    display: flex;
    background-color: #fff;
    border: 1px solid #ccc;
    border-radius: 4px;
}
.btn-group.toggled {
    background-color: #e6e6e6;
    box-shadow: inset 0 0 3px rgba(0, 0, 0, 0.2);
}
.g1 {
    width: 28px;
}
.g2 {
    width: 57px;
}
.g3 {
    width: 85px;
}
.tight {
    margin-left: -1px;
}
.ed-btn {
    flex: 1;
    display: flex;
    align-items: center;
    justify-content: center;
    border-right: 1px solid #ccc;
}
.ed-btn:last-child {
    border-right: none;
}
.letter {
    font: 700 21px "Liberation Serif", serif;
    color: #999;
}
.ital {
    font-style: italic;
    font-weight: 400;
}
.format-box {
    width: 87px;
    height: 29px;
    background-color: #fff;
    border: 1px solid #ccc;
    border-radius: 4px;
    display: flex;
    align-items: center;
    justify-content: space-between;
    padding: 0 5px 0 7px;
    font-family: "Open Sans", sans-serif;
    font-size: 9.400px;
    color: #333;
}
.format-box i {
    width: 0;
    height: 0;
    border-left: 4px solid transparent;
    border-right: 4px solid transparent;
    border-top: 4px solid #777;
}
.editor-body {
    height: 245px;
    flex-shrink: 0;
    display: flex;
    overflow: hidden;
    background-color: #fff;
}
.editor-text {
    flex: 1;
    padding: 7px 0 0 8px;
    font-size: 12.600px;
    line-height: 18px;
    color: #222;
    overflow: hidden;
    white-space: nowrap;
}
.editor-text p {
    margin: 0 0 9px;
}
.editor-scroll {
    width: 15px;
    flex-shrink: 0;
    background-color: #f1f1f1;
    display: flex;
    flex-direction: column;
    align-items: center;
    padding: 6px 0 3px;
}
.editor-thumb {
    width: 13px;
    height: 182px;
    margin: 6px 0 auto;
    background-color: #bdbdbd;
}
.editor-path {
    flex: 1;
    background-color: #f0f0f0;
    border-top: 1px solid #bbb;
    display: flex;
    justify-content: space-between;
    align-items: flex-end;
    padding-left: 2px;
    font-size: 11px;
    line-height: 16px;
    color: #111;
}
.editor-path span {
    margin-bottom: 2px;
}
.page-buttons {
    width: 544px;
    margin: 49px 0 0 4px;
    display: flex;
    justify-content: space-between;
}
.green-btn {
    height: 29px;
    background-color: #8dc63f;
    color: #fff;
    font-size: 12.600px;
    line-height: 27px;
    text-align: center;
    border-bottom: 1px solid #7fb236;
}
.prev {
    width: 116px;
}
.next {
    width: 92px;
}
.jump-row {
    display: grid;
    grid-template-columns: 188px 172px 1fr;
    align-items: center;
    width: 548px;
}
.jump-row {
    margin-top: 34px;
}
.jump-link {
    margin-bottom: 3px;
    font-size: 11.500px;
    color: #f0a51e;
}
.tri {
    font-size: 13px;
    line-height: 1;
    color: #eda400;
}
.tri-prev {
    margin-right: -2px;
}
.jump-next {
    justify-self: end;
}
.jump-select {
    height: 27px;
    background-color: #fff;
    border: 1px solid #ccc;
    border-radius: 2px;
    padding-left: 4px;
    font-family: "Open Sans", sans-serif;
    font-size: 12.500px;
    color: #555;
}
.quiz-nav {
    width: 169px;
    height: 138px;
    margin-left: 18px;
    flex-shrink: 0;
    background-color: #f0f0f0;
    border-radius: 2px;
    padding: 7px 12px 0 6px;
}
.quiz-nav-head {
    height: 31px;
    display: flex;
    align-items: flex-start;
    position: relative;
}
.quiz-nav-head::after {
    content: "";
    position: absolute;
    left: 6px;
    right: 0;
    bottom: 0;
    border-bottom: 1px solid #ddd;
}
.quiz-nav-icon {
    width: 32px;
    height: 27px;
    background-color: #fdbd38;
    border-radius: 2px;
    display: flex;
    align-items: center;
    justify-content: center;
}
.quiz-nav-head h3 {
    margin: 8px 0 0 9px;
    font-size: 13.400px;
    font-weight: 700;
    line-height: 18px;
    color: #555;
    white-space: nowrap;
}
.quiz-cells {
    display: flex;
    gap: 6px;
    margin: 7px 0 0 11px;
}
.cell {
    width: 27px;
    height: 36px;
    border: 1px solid #555;
    border-radius: 3px;
    background-color: #fff;
    color: #555;
    font-size: 12.500px;
    line-height: 16px;
    text-align: center;
}
.cell.last {
    margin-left: -1px;
}
.cell.answered {
    background-image: linear-gradient(#fff 17px, #999 17px);
}
.cell.current {
    border-color: #8dc63f;
}
.finish {
    display: block;
    margin: 15px 0 0 11px;
    font-size: 11.700px;
    color: #f0a51e;
}
.site-footer {
    margin-top: 21px;
    border-top: 2px solid #fdbd38;
}
.footer-top {
    height: 37px;
    background-color: #333a45;
    border-bottom: 1px solid #3e454f;
}
.footer-bottom {
    height: 40px;
    background-color: #2a3039;
}
```
